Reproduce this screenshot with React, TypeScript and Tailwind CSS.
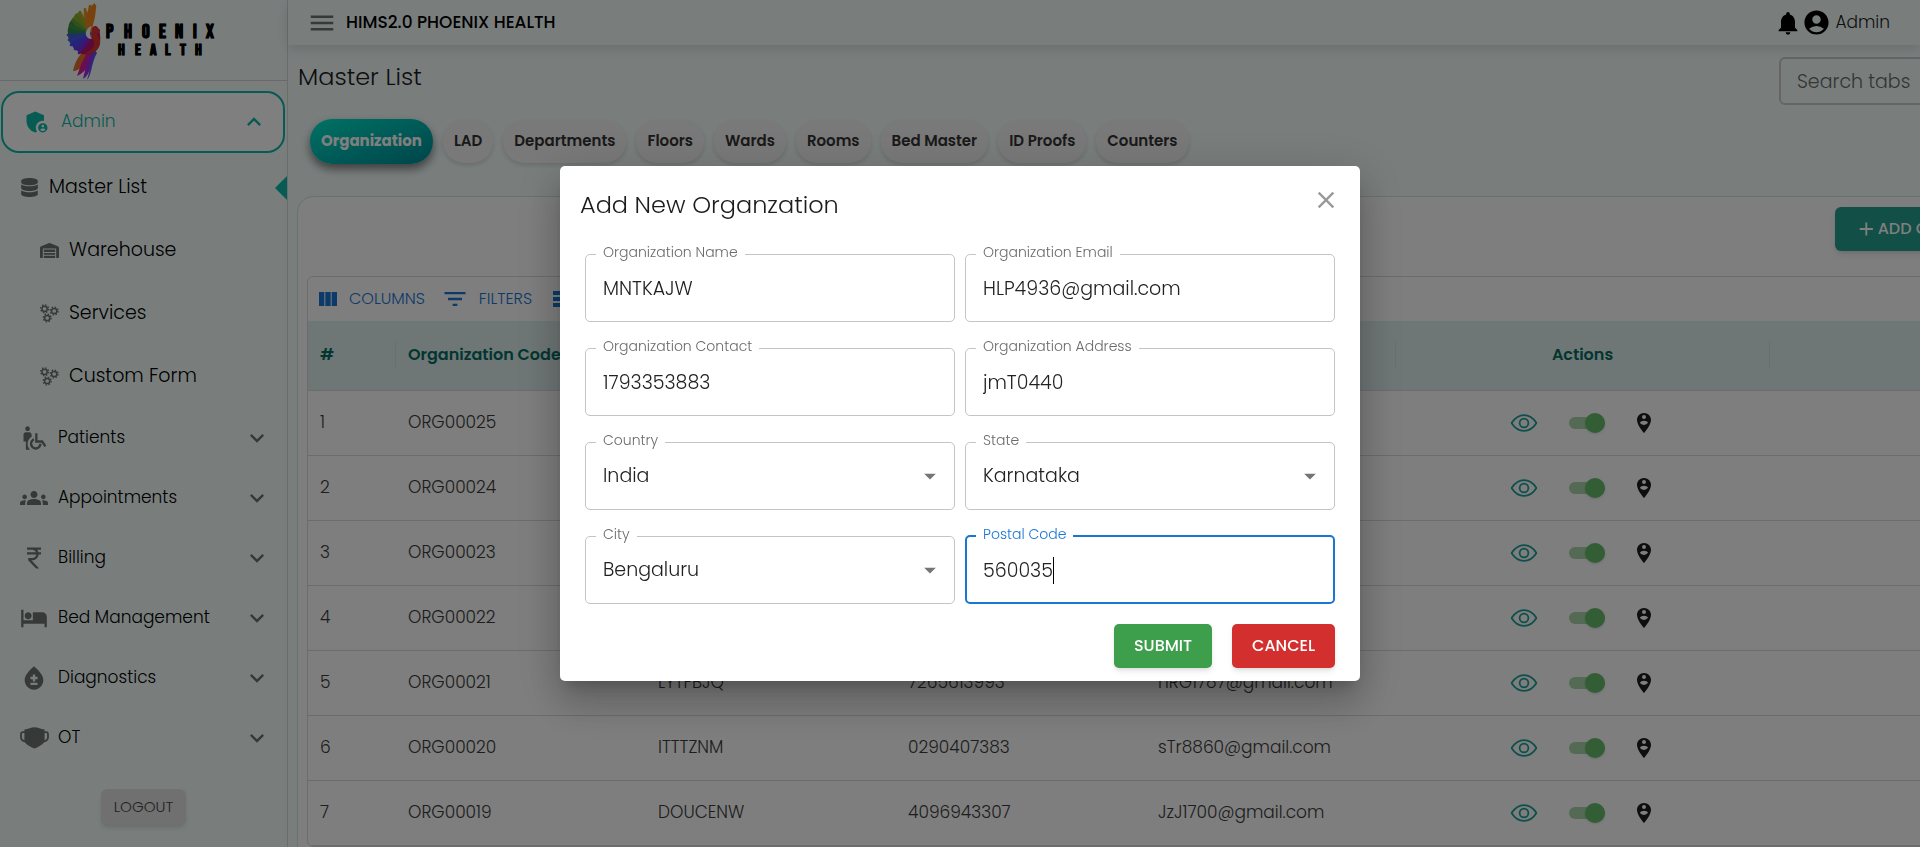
import type { ReactNode } from "react";
import {
  MdAccountCircle,
  MdAdd,
  MdAdminPanelSettings,
  MdArrowDropDown,
  MdBloodtype,
  MdClose,
  MdCurrencyRupee,
  MdExpandLess,
  MdExpandMore,
  MdFilterList,
  MdGroups,
  MdHotel,
  MdMenu,
  MdNotifications,
  MdPersonPinCircle,
  MdTableRows,
  MdViewColumn,
  MdWheelchairPickup,
} from "react-icons/md";
import { FaDatabase } from "react-icons/fa";
import { FaWarehouse } from "react-icons/fa6";
import { IoEyeOutline } from "react-icons/io5";

const feathers: [number, number, string][] = [
  [28, 2, "#f0801c"],
  [23, 2, "#f58a1a"],
  [18, 5, "#e0981c"],
  [13, 8, "#a8a824"],
  [9, 11, "#86ac2c"],
  [6, 16, "#64a136"],
  [3, 21, "#3f9440"],
  [2, 26, "#2e8a48"],
  [1, 31, "#3a62c8"],
  [2, 36, "#4658e8"],
  [4, 41, "#4b48f0"],
  [8, 45, "#5a3cf0"],
  [12, 49, "#6e30e8"],
  [17, 51, "#8a22d0"],
];

function Logo() {
  return (
    <svg viewBox="0 0 156 78" className="h-[78px] w-[156px]" role="img" aria-label="Phoenix Health">
      <path d="M25 32 L14 8 Q6 14 3 21Z" fill="#8fae2e" />
      <path d="M25 33 L5 18 Q1 24 2 31Z" fill="#2f8f44" />
      <path d="M26 33 L2 31 Q2 40 8 45Z" fill="#4355e6" />
      <path d="M26 34 L7 44 Q12 50 20 52Z" fill="#6a34e6" />
      {feathers.map(([x, y, fill]) => (
        <path
          key={fill}
          d={`M24 31 L${x + 1} ${y + 1} L${(x + 24) / 2 - 2} ${(y + 31) / 2 + 3}Z`}
          fill={fill}
          stroke={fill}
          strokeWidth="2.6"
          strokeLinejoin="round"
        />
      ))}
      <path d="M29 0 C30 8 30 16 25 25 L20 26 C18 15 21 5 29 0Z" fill="#ee851c" />
      <path d="M25 42 C14 49 9 58 7 68 C14 68 22 60 27 50Z" fill="#e0702c" />
      <path d="M26 44 C18 52 15 62 11 73 C19 70 25 60 29 50Z" fill="#d81b9a" />
      <path d="M27 46 C21 56 20 64 17 76 C24 72 26 60 30 50Z" fill="#9a2be0" />
      <path d="M28 46 C25 58 24 68 21 77 C26 72 25 60 31 50Z" fill="#5a4ff0" />
      <path d="M12 50 C20 46 24 38 27 31 C25 26 26 23 30 23 L34 27 C33 30 35 33 34 39 C33 48 26 54 12 50Z" fill="#b8126e" />
      <path d="M26 23 C22 24 19 28 20 32 C21 35 23 36 26 36 C24 33 23 28 26 23Z" fill="#f2fdfb" />
      <path d="M27 25 C29 22 33 24 33 28 L34 30 L31 30 C32 33 35 36 34 41 C32 49 25 52 19 50 C27 47 30 42 27 37 C24 33 25 28 27 25Z" fill="#d8352c" />
      <g
        fill="#000"
        stroke="#000"
        strokeWidth="0.5"
        fontWeight="700"
        fontFamily="'Bebas Neue', Anton, Oswald, 'Roboto Condensed', 'Liberation Sans Narrow', 'Liberation Mono', monospace"
      >
        <text x="40 58 76 93 109 127 140" y="35" fontSize="19">
          PHOENIX
        </text>
        <text x="52 69 84 99 114 129" y="52" fontSize="16">
          HEALTH
        </text>
      </g>
    </svg>
  );
}

function Gear({ cx, cy }: { cx: number; cy: number }) {
  return (
    <g fill="none" stroke="currentColor">
      <circle cx={cx} cy={cy} r="2.6" strokeWidth="1.5" />
      <circle cx={cx} cy={cy} r="3.9" strokeWidth="1.4" strokeDasharray="1.53 1.53" />
    </g>
  );
}

function GearsIcon() {
  return (
    <svg viewBox="0 0 19 19" className="size-[19px]" aria-hidden="true">
      <Gear cx={4.6} cy={4.8} />
      <Gear cx={14.2} cy={7} />
      <Gear cx={7.2} cy={14} />
    </svg>
  );
}

function MaskIcon() {
  return (
    <svg viewBox="0 0 29 22" className="h-[22px] w-[29px]" aria-hidden="true">
      <path
        d="M4.4 2.4C8.4 2.2 11 .3 14.5 .3S20.6 2.2 24.6 2.4V14.2C24.6 16.4 18 20 14.5 21.6C11 20 4.4 16.4 4.4 14.2Z"
        fill="currentColor"
      />
      <path
        d="M5 5.2H3Q1 5.2 1 7.2V10Q1 13.8 5.2 14.3M24 5.2H26Q28 5.2 28 7.2V10Q28 13.8 23.8 14.3"
        fill="none"
        stroke="currentColor"
        strokeWidth="1.8"
      />
    </svg>
  );
}

const subItems: { label: string; icon: ReactNode }[] = [
  { label: "Warehouse", icon: <FaWarehouse size={19} /> },
  { label: "Services", icon: <GearsIcon /> },
  { label: "Custom Form", icon: <GearsIcon /> },
];

const menuItems: { label: string; icon: ReactNode }[] = [
  { label: "Patients", icon: <MdWheelchairPickup size={28} /> },
  { label: "Appointments", icon: <MdGroups size={28} /> },
  { label: "Billing", icon: <MdCurrencyRupee size={28} /> },
  { label: "Bed Management", icon: <MdHotel size={28} /> },
  { label: "Diagnostics", icon: <MdBloodtype size={28} /> },
  { label: "OT", icon: <MaskIcon /> },
];

const tabs = ["Organization", "LAD", "Departments", "Floors", "Wards", "Rooms", "Bed Master", "ID Proofs", "Counters"];

const rows = [
  ["1", "ORG00025", "", "", ""],
  ["2", "ORG00024", "", "", ""],
  ["3", "ORG00023", "", "", ""],
  ["4", "ORG00022", "", "", ""],
  ["5", "ORG00021", "LYTFBJQ", "7265613993", "nRG1787@gmail.com"],
  ["6", "ORG00020", "ITTTZNM", "0290407383", "sTr8860@gmail.com"],
  ["7", "ORG00019", "DOUCENW", "4096943307", "JzJ1700@gmail.com"],
];

function Sidebar() {
  return (
    <aside className="flex w-72 shrink-0 flex-col border-r border-[#d9d9d9]">
      <div className="flex h-[81px] shrink-0 justify-center border-b border-[#d9cfd2] pt-[3px]">
        <Logo />
      </div>
      <nav className="text-[17px]">
        <button className="mx-px mt-[10px] flex h-[62px] w-[284px] items-center rounded-[18px] border-2 border-[#0cb8a6] bg-white pr-[15px] pl-5 text-[#0cb8a6]">
          <MdAdminPanelSettings size={28} />
          <span className="ml-[10px] flex-1 text-left">Admin</span>
          <MdExpandLess size={28} />
        </button>
        <a href="#master" className="mt-[3px] flex h-[63px] items-center pl-5 text-[19px] text-black">
          <FaDatabase size={19} className="text-[#6e7372]" />
          <span className="ml-[10px] flex-1">Master List</span>
          <svg viewBox="0 0 12 24" className="h-6 w-3" aria-hidden="true">
            <path d="M12 0V24L0 12Z" fill="#0cb8a6" />
          </svg>
        </a>
        {subItems.map((item) => (
          <a key={item.label} href="#sub" className="flex h-[63px] items-center gap-[10px] pl-10 text-[19px] text-black">
            <span className="text-[#6e7372]">{item.icon}</span>
            {item.label}
          </a>
        ))}
        {menuItems.map((item) => (
          <button key={item.label} className="flex h-[60px] w-full items-center pr-4 pl-5 text-black">
            <span className="flex w-7 justify-center text-[#6e7372]">
              <span className="shrink-0">{item.icon}</span>
            </span>
            <span className="ml-[10px] flex-1 text-left">{item.label}</span>
            <MdExpandMore size={28} className="text-[#6e7372]" />
          </button>
        ))}
      </nav>
      <button className="mx-auto mt-[21px] h-9 shrink-0 rounded-md bg-[#e0e0e0] px-[13px] text-[15px] text-[#444] shadow-md">
        LOGOUT
      </button>
    </aside>
  );
}

function Topbar() {
  return (
    <header className="z-10 flex h-[45px] shrink-0 items-center pr-[30px] pl-[19px] shadow-[0_4px_12px_rgba(0,0,0,0.12)]">
      <button aria-label="Toggle menu" className="text-[#6e7372]">
        <MdMenu size={30} />
      </button>
      <h1 className="ml-[9px] flex-1 text-[17px] font-medium text-black">HIMS2.0 PHOENIX HEALTH</h1>
      <button aria-label="Notifications" className="text-black">
        <MdNotifications size={28} />
      </button>
      <MdAccountCircle size={29} className="text-black" />
      <span className="ml-1 text-[17px] text-[#222]">Admin</span>
    </header>
  );
}

function OrganizationTable() {
  return (
    <div className="overflow-hidden rounded-md border border-[#d8d8d8]">
      <div className="flex h-11 items-center pl-2 text-base text-[#1976d2]">
        <button className="flex items-center gap-[9px]">
          <MdViewColumn size={24} />
          COLUMNS
        </button>
        <button className="ml-4 flex items-center gap-[10px]">
          <MdFilterList size={28} />
          FILTERS
        </button>
        <button className="ml-[18px] flex items-center gap-2">
          <MdTableRows size={24} />
          DENSITY
        </button>
      </div>
      <table className="w-full table-fixed border-collapse text-[17px] text-[#3a3a3a]">
        <colgroup>
          <col className="w-[88px]" />
          <col className="w-[250px]" />
          <col className="w-[250px]" />
          <col className="w-[250px]" />
          <col className="w-[250px]" />
          <col className="w-[374px]" />
          <col />
        </colgroup>
        <thead>
          <tr className="h-[69px] border-b border-[#d8d8d8] bg-[#deeeec] text-left text-base text-[#066b63]">
            {["#", "Organization Code", "Organization Name", "Contact", "Email", "Actions", ""].map((h, i) => (
              <th key={i} className="p-0 font-semibold">
                <div className="flex h-7 items-center border-r border-[#d5dcdb] px-3">
                  <span className={h === "Actions" ? "flex-1 text-center" : ""}>{h}</span>
                </div>
              </th>
            ))}
          </tr>
        </thead>
        <tbody>
          {rows.map((cells) => (
            <tr key={cells[0]} className="h-[65px] border-b border-[#d8d8d8]">
              {cells.map((c, i) => (
                <td key={i} className="px-3 py-0">
                  {c}
                </td>
              ))}
              <td className="p-0">
                <div className="flex items-center pl-[114px]">
                  <button aria-label="View" className="text-[#1a9f98]">
                    <IoEyeOutline size={28} />
                  </button>
                  <label className="ml-[31px] flex items-center">
                    <input type="checkbox" defaultChecked className="sr-only" aria-label="Active" />
                    <span className="flex h-3 w-9 items-center justify-end rounded-full bg-[#a8d5aa]">
                      <span className="size-5 rounded-full bg-[#66bb6a] shadow-sm" />
                    </span>
                  </label>
                  <button aria-label="Location" className="ml-[27px] text-[#1c1c1c]">
                    <MdPersonPinCircle size={24} />
                  </button>
                </div>
              </td>
              <td />
            </tr>
          ))}
        </tbody>
      </table>
    </div>
  );
}

function Content() {
  return (
    <main className="min-h-0 flex-1 overflow-hidden">
      <div className="w-[1768px] pt-3 pl-[9px]">
        <div className="flex h-12 items-center justify-between pr-10 pl-px">
          <h2 className="pb-2 text-2xl text-[#1c1c1c]">Master List</h2>
          <input
            type="text"
            aria-label="Search tabs"
            placeholder="Search tabs"
            className="h-12 w-[237px] rounded-md border-2 border-[#cfc8ca] bg-transparent px-4 text-[19px] placeholder:text-[#6b6b6b]"
          />
        </div>
        <div className="mt-[14px] flex h-[45px] items-center gap-[10px] pl-[13px]">
          {tabs.map((t, i) => (
            <button
              key={t}
              className={
                i === 0
                  ? "h-[45px] rounded-[22px] bg-linear-to-br from-[#00e5c8] to-[#008a96] px-[11px] text-[15px] font-bold text-white shadow-[0_5px_10px_rgba(0,0,0,0.5)]"
                  : "h-[43px] rounded-[22px] bg-[#f5f3f3] px-[11px] text-[15px] font-semibold text-[#333] shadow-[0_2px_5px_rgba(0,0,0,0.15)]"
              }
            >
              {t}
            </button>
          ))}
        </div>
        <section className="mt-8 rounded-tl-2xl border border-[#c9e6e6] bg-[#fbfcfb] px-[9px] pt-[10px] pb-4">
          <div className="flex h-[69px] items-start justify-end">
            <button className="mr-[11px] flex h-11 w-[200px] items-center rounded-md bg-[#249e8e] pl-5 text-base font-medium whitespace-nowrap text-white shadow-md">
              <MdAdd size={24} />
              ADD ORGANIZATION
            </button>
          </div>
          <OrganizationTable />
        </section>
      </div>
    </main>
  );
}

type FieldProps = { id: string; label: string; value: string; kind?: "text" | "select"; focused?: boolean };

function Field({ id, label, value, kind = "text", focused = false }: FieldProps) {
  return (
    <fieldset
      className={
        focused
          ? "relative h-[78px] min-w-0 rounded-[5px] border-2 border-[#1976d2] pl-[9px] text-[#1976d2]"
          : "relative h-[78px] min-w-0 rounded-[5px] border border-[#c4c4c4] pl-[10px] text-[#6b6b6b]"
      }
    >
      <legend className="h-5 px-[7px] text-sm leading-4">
        <label htmlFor={id}>{label}</label>
      </legend>
      {kind === "select" ? (
        <>
          <select id={id} className="block h-12 w-full appearance-none bg-transparent px-[7px] text-[19px] text-[#222] outline-none">
            <option>{value}</option>
          </select>
          <MdArrowDropDown size={28} className="pointer-events-none absolute top-[10px] right-[10px] text-[#757575]" />
        </>
      ) : (
        <div className="flex h-12 items-center px-[7px]">
          <input
            id={id}
            defaultValue={value}
            className={
              focused
                ? "field-sizing-content h-12 bg-transparent text-[19px] text-[#222] outline-none"
                : "h-12 w-full bg-transparent text-[19px] text-[#222] outline-none"
            }
          />
          {focused && <span className="h-[27px] w-px bg-black" />}
        </div>
      )}
    </fieldset>
  );
}

function OrganizationDialog() {
  return (
    <div className="fixed inset-0 z-20 flex items-center justify-center bg-black/50">
      <form
        role="dialog"
        aria-labelledby="dialog-title"
        className="w-[800px] rounded-[5px] bg-white px-[25px] pb-[13px] shadow-[0_11px_15px_-7px_rgba(0,0,0,0.2),0_24px_38px_3px_rgba(0,0,0,0.14),0_9px_46px_8px_rgba(0,0,0,0.12)]"
      >
        <div className="-mx-[5px] flex h-[78px] items-center justify-between">
          <h2 id="dialog-title" className="text-2xl text-[#1c1c1c]">
            Add New Organzation
          </h2>
          <button type="button" aria-label="Close" className="pb-[10px] text-[#999]">
            <MdClose size={28} />
          </button>
        </div>
        <div className="grid grid-cols-2 gap-x-[10px] gap-y-4">
          <Field id="org-name" label="Organization Name" value="MNTKAJW" />
          <Field id="org-email" label="Organization Email" value="HLP4936@gmail.com" />
          <Field id="org-contact" label="Organization Contact" value="1793353883" />
          <Field id="org-address" label="Organization Address" value="jmT0440" />
          <Field id="org-country" label="Country" value="India" kind="select" />
          <Field id="org-state" label="State" value="Karnataka" kind="select" />
          <Field id="org-city" label="City" value="Bengaluru" kind="select" />
          <Field id="org-postal" label="Postal Code" value="560035" focused />
        </div>
        <div className="mt-5 flex justify-end gap-5 text-base font-medium text-white">
          <button type="button" className="h-11 rounded-[5px] bg-[#3d9f4b] px-5 shadow-md">
            SUBMIT
          </button>
          <button type="button" className="h-11 rounded-[5px] bg-[#d32f2f] px-5 shadow-md">
            CANCEL
          </button>
        </div>
      </form>
    </div>
  );
}

export default function App() {
  return (
    <div className="flex h-screen overflow-hidden bg-[#f2fdfb] font-[Poppins,Inter,sans-serif] font-light">
      <Sidebar />
      <div className="flex min-w-0 flex-1 flex-col">
        <Topbar />
        <Content />
      </div>
      <OrganizationDialog />
    </div>
  );
}
